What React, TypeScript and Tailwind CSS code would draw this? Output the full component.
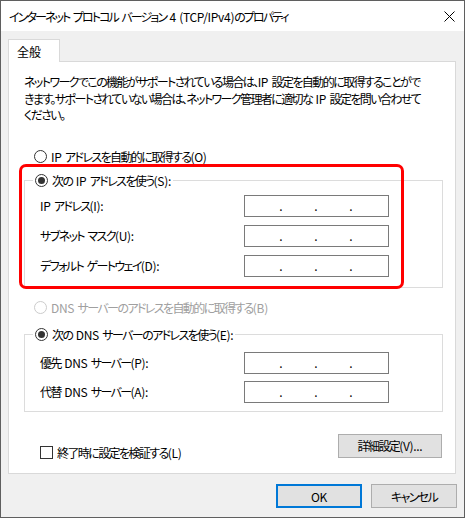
import React from 'react';

const font = "font-['Noto_Sans_CJK_JP',sans-serif] [font-feature-settings:'palt'] tracking-[-1.6px]";

// 英数字部分だけ字間を戻す (Yu Gothic UI の見た目に寄せる)
function T({ children }: { children: string }) {
  const parts = children.split(/([\x00-\x7F]+)/).filter(Boolean);
  return (
    <>
      {parts.map((p, i) =>
        /^[\x00-\x7F]+$/.test(p) ? (
          <span key={i} className="tracking-[-0.3px] [word-spacing:1px]">
            {p}
          </span>
        ) : (
          <span key={i}>{p}</span>
        )
      )}
    </>
  );
}

function Radio({ checked = false, disabled = false }: { checked?: boolean; disabled?: boolean }) {
  return (
    <span
      className={`flex items-center justify-center w-[13px] h-[13px] rounded-full border bg-white shrink-0 ${
        disabled ? 'border-[#cccccc]' : 'border-[#333333]'
      }`}
    >
      {checked && <span className="w-[7px] h-[7px] rounded-full bg-[#333333]" />}
    </span>
  );
}

function IpBox() {
  return (
    <div className="flex items-center w-[145px] h-[22px] border border-[#7a7a7a] bg-white pl-[34px] gap-[31px]">
      {[0, 1, 2].map((i) => (
        <span key={i} className="w-[4px] text-center leading-none text-[12px] tracking-normal">
          .
        </span>
      ))}
    </div>
  );
}

function FieldRow({ label }: { label: string }) {
  return (
    <div className="flex items-center justify-between h-[22px]">
      <span className="whitespace-nowrap">
        <T>{label}</T>
      </span>
      <IpBox />
    </div>
  );
}

// グループボックス (凡例はラジオボタン)
function Group({ legend, children, gap, pt, pb }: { legend: string; children: React.ReactNode; gap: string; pt: string; pb: string }) {
  return (
    <div className={`border border-[#dcdcdc] ml-[15px] mr-[12px] ${pb}`}>
      <div className="-mt-[9px] ml-[8px] flex">
        <label className="flex items-center gap-[4px] h-[17px] px-[2px] bg-white">
          <Radio checked />
          <span className="whitespace-nowrap">
            <T>{legend}</T>
          </span>
        </label>
      </div>
      <div className={`flex flex-col pl-[15px] pr-[53px] ${pt} ${gap}`}>{children}</div>
    </div>
  );
}

export default function App() {
  return (
    <div className={`relative w-[465px] h-[518px] flex flex-col border border-[#5f5f5f] bg-[#f0f0f0] text-[12px] leading-[17px] text-black ${font}`}>
      {/* タイトルバー */}
      <div className="flex items-center justify-between h-[30px] bg-white pl-[8px] pr-[9px]">
        <span className="whitespace-nowrap tracking-[-1.9px]">
          <T>インターネット プロトコル バージョン 4 (TCP/IPv4)のプロパティ</T>
        </span>
        <svg width="11" height="11" viewBox="0 0 11 11" className="mt-[1px]">
          <path d="M0.5 0.5 L10.5 10.5 M10.5 0.5 L0.5 10.5" stroke="#000" strokeWidth="1" />
        </svg>
      </div>

      <div className="flex-1 flex flex-col pt-[8px] pl-[7px] pr-[8px]">
        {/* タブ */}
        <div className="relative z-10 -mb-px flex items-center w-[52px] h-[23px] pl-[8px] bg-white border border-b-0 border-[#d9d9d9] tracking-normal">
          全般
        </div>

        {/* パネル */}
        <div className="flex flex-col h-[413px] bg-white border border-[#d9d9d9] pt-[12px]">
          <p className="pl-[15px] leading-[16.5px] whitespace-nowrap">
            <T>ネットワークでこの機能がサポートされている場合は、IP 設定を自動的に取得することがで</T>
            <br />
            <T>きます。サポートされていない場合は、ネットワーク管理者に適切な IP 設定を問い合わせて</T>
            <br />
            ください。
          </p>

          <label className="flex items-center gap-[4px] h-[17px] mt-[24px] ml-[25px]">
            <Radio />
            <span>
              <T>IP アドレスを自動的に取得する(O)</T>
            </span>
          </label>

          <div className="mt-[15px]">
            <Group legend="次の IP アドレスを使う(S):" pt="pt-[6px]" gap="gap-[8px]" pb="pb-[10px]">
              <FieldRow label="IP アドレス(I):" />
              <FieldRow label="サブネット マスク(U):" />
              <FieldRow label="デフォルト ゲートウェイ(D):" />
            </Group>
          </div>

          <label className="flex items-center gap-[4px] h-[17px] mt-[11px] ml-[25px] text-[#a0a0a0]">
            <Radio disabled />
            <span>
              <T>DNS サーバーのアドレスを自動的に取得する(B)</T>
            </span>
          </label>

          <div className="mt-[18px]">
            <Group legend="次の DNS サーバーのアドレスを使う(E):" pt="pt-[9px]" gap="gap-[7px]" pb="pb-[8px]">
              <FieldRow label="優先 DNS サーバー(P):" />
              <FieldRow label="代替 DNS サーバー(A):" />
            </Group>
          </div>

          <div className="flex items-start justify-between mt-[22px] ml-[31px] mr-[13px]">
            <label className="flex items-center gap-[4px] h-[17px] mt-[10px]">
              <span className="w-[13px] h-[13px] border border-[#333333] bg-white" />
              <span>
                <T>終了時に設定を検証する(L)</T>
              </span>
            </label>
            <button className="w-[104px] h-[24px] bg-[#e1e1e1] border border-[#adadad]">
              <T>詳細設定(V)...</T>
            </button>
          </div>
        </div>

        {/* ダイアログボタン */}
        <div className="flex justify-end gap-[9px] mt-[10px] mr-[-1px]">
          <button className="w-[86px] h-[24px] bg-[#e1e1e1] border-2 border-[#0078d7]">
            <T>OK</T>
          </button>
          <button className="w-[86px] h-[24px] bg-[#e1e1e1] border border-[#adadad]">キャンセル</button>
        </div>
      </div>

      {/* 注記の赤枠 */}
      <div className="absolute left-[18px] top-[163px] w-[385px] h-[125px] border-[3px] border-[#ff0000] rounded-[7px] pointer-events-none" />
    </div>
  );
}
